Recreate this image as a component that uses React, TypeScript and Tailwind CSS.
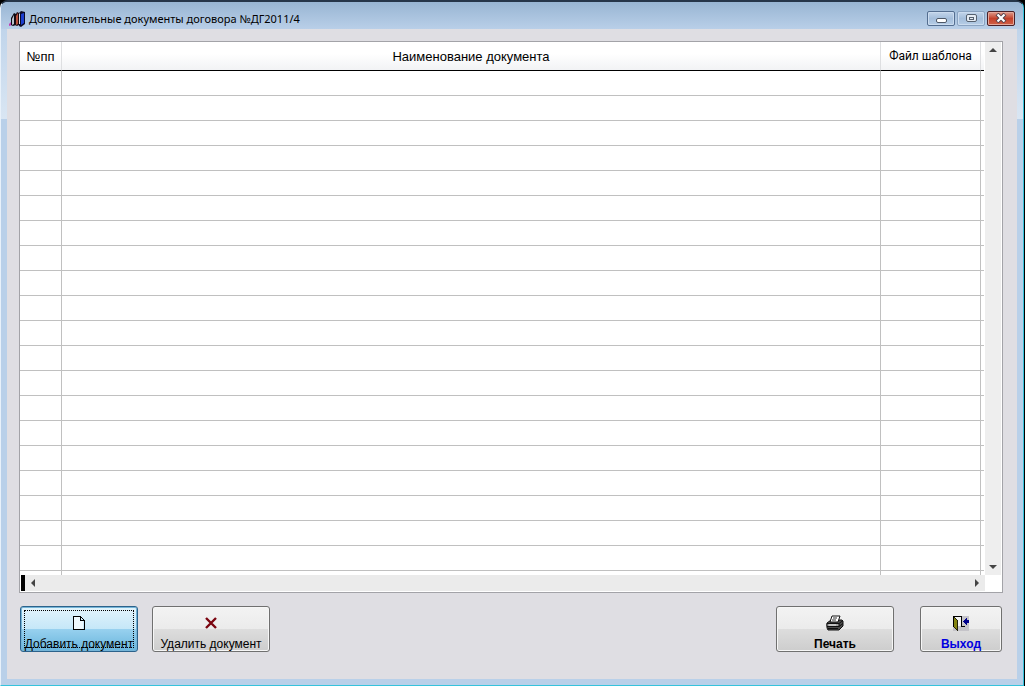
import type { ReactNode } from "react";
import { clsx } from "clsx";

const ROWS = Array.from({ length: 60 }, (_, i) => i);

const HEAD_CELL = "border-r border-b border-r-[#dedfe1] border-b-black p-0 font-normal";
const BODY_CELL = "border-r border-b border-[#c0c0c0] p-0";

function BooksIcon() {
  return (
    <svg width="16" height="17" viewBox="0 0 16 17" aria-hidden="true">
      <path d="M0 14l3-3v4l-3 1z" fill="#c23cb4" />
      <path d="M2 15V8l3-5 2 1v11l-3 1z" fill="#0d0a14" />
      <path d="M3 15V9l2-4v9z" fill="#b9c2cc" />
      <path d="M6 15V6l2-4 2 1v12l-2 1z" fill="#1c0a10" />
      <path d="M7 15V6l2-3v11z" fill="#b8503c" />
      <path d="M10 16V3l2-2 4 1v12l-4 3z" fill="#0a0a28" />
      <path d="M10 4l1-1v11h-1z" fill="#d5dbe4" />
      <path d="M12 4l3-1v10l-3 2z" fill="#1b3fd0" />
    </svg>
  );
}

function PageIcon() {
  return (
    <svg width="12" height="14" viewBox="0 0 12 14" shapeRendering="crispEdges" aria-hidden="true">
      <path d="M1 1h6v3h3v9H1z" fill="#eef8fd" />
      <path d="M0 0h8v1H1v12h10V4h1v10H0zM7 1h1v3h3v1H7zM8 1h1v1H8zM9 2h1v1H9zM10 3h1v1h-1z" fill="#000" />
    </svg>
  );
}

function CrossIcon() {
  return (
    <svg width="12" height="12" viewBox="0 0 12 12" aria-hidden="true">
      <path d="M1 1l10 10M11 1L1 11" stroke="#7b0510" strokeWidth="2.4" />
    </svg>
  );
}

function PrinterIcon() {
  return (
    <svg width="18" height="16" viewBox="0 0 18 16" aria-hidden="true">
      <path d="M1 8 5 5h11l1 1v5l-4 4H2l-1-2z" fill="#4b4b4b" stroke="#111" />
      <path d="M6 1h8l-2 6H4z" fill="#fff" stroke="#111" />
      <path d="M7 3h4M6 5h4" stroke="#333" />
      <path d="M1 8.500h12v3H1z" fill="#a5a5a5" stroke="#111" />
      <path d="M13 8.500l4-3M13 11.500l4-3M2 13.500h10" stroke="#111" />
      <path d="M3 10h7" stroke="#e3e3e3" />
    </svg>
  );
}

function DoorIcon() {
  return (
    <svg width="16" height="15" viewBox="0 0 16 15" shapeRendering="crispEdges" aria-hidden="true">
      <path d="M0 0h16v15H0z" fill="#c5c4c9" />
      <path d="M1 1h7v9H1z" fill="#f5f5f5" />
      <path d="M0 0h9v11H8V1H1v10H0zM8 10h4v1H8z" fill="#000" />
      <path d="M1 1 5 4v11L1 11z" fill="#848410" />
      <path d="M1 1h1v1h1v1h1v1h1v11H4V4H3V3H2V2H1zM1 11h1v1h1v1h1v1H3v-1H2v-1H1z" fill="#222208" />
      <path d="M10 5h1V4h1V3h1V2h1v2h2v3h-2v2h-1V8h-1V7h-1V6h-1z" fill="#00008b" />
    </svg>
  );
}

function Arrow({ d, label }: { d: string; label: string }) {
  return (
    <button type="button" aria-label={label} className="flex size-4 shrink-0 items-center justify-center">
      <svg width="8" height="8" viewBox="0 0 8 8" aria-hidden="true">
        <path d={d} fill="#444" />
      </svg>
    </button>
  );
}

type CaptionButtonProps = {
  label: string;
  danger?: boolean;
  dim?: boolean;
  children: ReactNode;
};

function CaptionButton({ label, danger, dim, children }: CaptionButtonProps) {
  return (
    <button
      type="button"
      aria-label={label}
      className={clsx(
        "flex h-[15px] w-7 items-center justify-center rounded-xs border inset-ring",
        danger && "border-[#4a2027] bg-linear-to-b from-[#dc9a8c] via-[#c4402a] via-50% to-[#cf6148] inset-ring-[#e5a99c]",
        !danger && "bg-linear-to-b from-[#c3d5ea] via-[#a4bedb] via-50% to-[#b6cde6] inset-ring-[#cbdcef]",
        !danger && (dim ? "border-[#8aa3c1]" : "border-[#546e90]"),
      )}
    >
      {children}
    </button>
  );
}

type ActionButtonProps = {
  icon: ReactNode;
  label: string;
  active?: boolean;
  className?: string;
};

function ActionButton({ icon, label, active, className }: ActionButtonProps) {
  return (
    <button
      type="button"
      className={clsx(
        "relative flex h-[46px] flex-col items-center rounded-[3px] border pt-2 whitespace-nowrap inset-ring",
        active
          ? "border-[#2c628b] bg-[linear-gradient(#e3f4fc,#c5e7f8_50%,#98d1ef_50%,#69b5dc)] inset-ring-[#74b4d8]"
          : "border-[#707070] bg-[linear-gradient(#f3f3f3,#ebebeb_50%,#dddddd_50%,#cdcdcd)] inset-ring-[#f6f6f6]",
        className,
      )}
    >
      {active && <span className="absolute inset-[3px] border border-dotted border-black" />}
      <span className="flex h-4 shrink-0 items-center">{icon}</span>
      <span className="mt-[6px] leading-[14px]">{label}</span>
    </button>
  );
}

export default function App() {
  return (
    <div className="h-screen bg-black pr-px font-['Liberation_Sans',Arial,sans-serif] text-xs text-black">
      <div className="flex h-full flex-col rounded-t-lg border-t-2 border-r border-b border-l border-t-[#26364a] border-r-[#35c3dc] border-b-[#35c3dc] border-l-[#e8f1fa] bg-[linear-gradient(#b9cfe8,#d9e6f3_117px,#b9d0e9_117px)] px-[6px] pb-[6px]">
        <header className="-mx-[6px] flex h-[27px] shrink-0 items-center justify-between rounded-t-md bg-linear-to-b from-[#98b5d3] to-[#b9cfe8] px-2">
          <div className="flex items-center gap-1 pt-[6px]">
            <BooksIcon />
            <h1 className="font-['Noto_Sans','Open_Sans',sans-serif] text-[11px] leading-4 whitespace-nowrap">
              Дополнительные документы договора №ДГ2011/4
            </h1>
          </div>
          <div className="flex gap-[2px] pt-[5px]">
            <CaptionButton label="Свернуть">
              <span className="mt-1 h-[5px] w-[11px] rounded-xs border border-[#4d5867] bg-white" />
            </CaptionButton>
            <CaptionButton label="Развернуть" dim>
              <span className="flex h-2 w-[11px] items-center justify-center rounded-xs border border-[#55606e] bg-[#e4ebf3]">
                <span className="h-[3px] w-[5px] border border-[#55606e]" />
              </span>
            </CaptionButton>
            <CaptionButton label="Закрыть" danger>
              <svg width="12" height="10" viewBox="0 0 12 10" aria-hidden="true">
                <path d="M2 1l8 8M10 1L2 9" stroke="#53404a" strokeWidth="4" />
                <path d="M2.500 1.500l7 7M9.500 1.500l-7 7" stroke="#fff" strokeWidth="2.200" />
              </svg>
            </CaptionButton>
          </div>
        </header>

        <main className="flex min-h-0 flex-1 flex-col bg-[#dfdee3] pt-3 pr-[14px] pb-[27px] pl-3">
          <div className="flex min-h-0 flex-1 flex-col border border-[#a3a3a8] bg-white">
            <div className="flex min-h-0 flex-1">
              <div className="min-w-0 flex-1 overflow-hidden">
                <table className="w-full table-fixed border-separate border-spacing-0">
                  <colgroup>
                    <col className="w-[42px]" />
                    <col />
                    <col className="w-[100px]" />
                    <col className="w-[3px]" />
                  </colgroup>
                  <thead>
                    <tr className="h-[29px] bg-linear-to-b from-white from-40% to-[#f1f2f4] text-[13px]">
                      <th className={clsx(HEAD_CELL, "pt-0.5")}>№пп</th>
                      <th className={clsx(HEAD_CELL, "pt-0.5")}>Наименование документа</th>
                      <th className={clsx(HEAD_CELL, "font-[Roboto,sans-serif] text-xs")}>Файл шаблона</th>
                      <td className="border-b border-black p-0" />
                    </tr>
                  </thead>
                  <tbody>
                    {ROWS.map((row) => (
                      <tr key={row} className="h-[25px]">
                        <td className={BODY_CELL} />
                        <td className={BODY_CELL} />
                        <td className={BODY_CELL} />
                        <td className="border-b border-[#c0c0c0] p-0" />
                      </tr>
                    ))}
                  </tbody>
                </table>
              </div>
              <div className="mx-px flex w-4 shrink-0 flex-col justify-between bg-[#eeeeee]">
                <Arrow label="Вверх" d="M0 6 4 2l4 4z" />
                <Arrow label="Вниз" d="M0 2 4 6l4-4z" />
              </div>
            </div>
            <div className="flex h-[17px] shrink-0 pb-px pl-px">
              <span className="w-1 bg-black" />
              <div className="flex flex-1 justify-between bg-[#ebebeb]">
                <Arrow label="Влево" d="M6 0 2 4l4 4z" />
                <Arrow label="Вправо" d="M2 0 6 4 2 8z" />
              </div>
              <span className="w-[17px]" />
            </div>
          </div>

          <footer className="mt-[13px] flex shrink-0 justify-between px-px">
            <div className="flex gap-[14px]">
              <ActionButton active icon={<PageIcon />} label="Добавить документ" className="w-[118px]" />
              <ActionButton icon={<CrossIcon />} label="Удалить документ" className="w-[118px]" />
            </div>
            <div className="flex gap-[26px]">
              <ActionButton icon={<PrinterIcon />} label="Печать" className="w-[118px] font-bold" />
              <ActionButton icon={<DoorIcon />} label="Выход" className="w-[82px] font-bold text-[#0000e0]" />
            </div>
          </footer>
        </main>
      </div>
    </div>
  );
}
